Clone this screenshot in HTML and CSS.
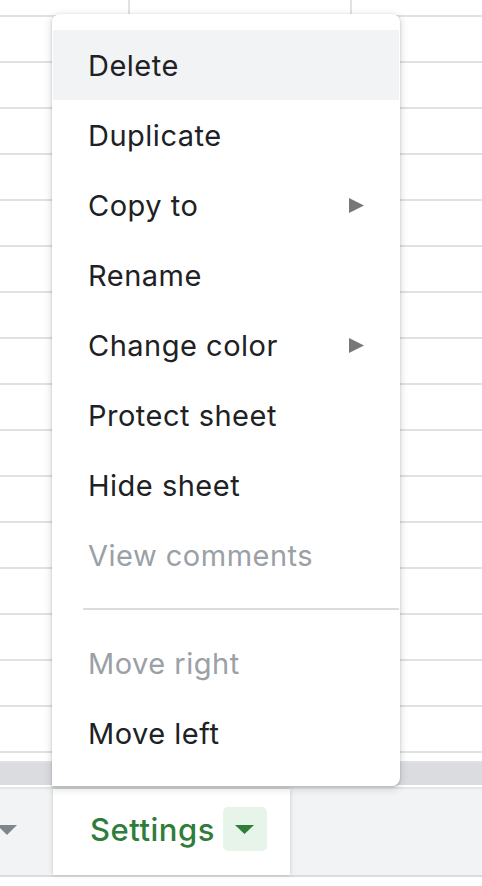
FILE: index.html
```html
<!DOCTYPE html>
<html>
<head>
<meta charset="utf-8">
<link rel="stylesheet" href="styles.css">
</head>
<body>
<div class="page">
  <div class="grid">
    <div class="head-row">
      <div class="hcell c1"></div>
      <div class="hcell c2"></div>
      <div class="hcell c3"></div>
    </div>
    <div class="row"></div><div class="row"></div><div class="row"></div><div class="row"></div>
    <div class="row"></div><div class="row"></div><div class="row"></div><div class="row"></div>
    <div class="row"></div><div class="row"></div><div class="row"></div><div class="row"></div>
    <div class="row"></div><div class="row"></div><div class="row"></div><div class="row"></div>
    <div class="gap"></div>
    <div class="scrollband"></div>
  </div>
  <div class="tabbar">
    <div class="tab-prev">
      <svg class="prev-caret" width="20" height="10" viewBox="0 0 20 10"><path d="M0 0h20L10 10z" fill="#80868b"/></svg>
    </div>
    <div class="tab-active">
      <span class="tab-name">Settings</span>
      <span class="tab-drop"><svg width="19" height="9" viewBox="0 0 19 9"><path d="M0 0h19L9.5 9z" fill="#2e7d3a"/></svg></span>
    </div>
    <div class="tab-rest"></div>
  </div>

  <div class="menu">
    <div class="item active">Delete</div>
    <div class="item">Duplicate</div>
    <div class="item">Copy to <span class="sub"><svg width="15" height="15" viewBox="0 0 15 15"><path d="M0 0L15 7.5L0 15z" fill="#777"/></svg></span></div>
    <div class="item">Rename</div>
    <div class="item">Change color <span class="sub"><svg width="15" height="15" viewBox="0 0 15 15"><path d="M0 0L15 7.5L0 15z" fill="#777"/></svg></span></div>
    <div class="item">Protect sheet</div>
    <div class="item">Hide sheet</div>
    <div class="item disabled">View comments</div>
    <div class="sep"></div>
    <div class="item disabled">Move right</div>
    <div class="item">Move left</div>
  </div>
</div>
</body>
</html>
```

FILE: styles.css
```css
html, body {
  margin: 0;
  padding: 0;
  background: #fff;
}
.page {
  position: relative;
  width: 482px;
  height: 886px;
  overflow: hidden;
  font-family: Inter, Roboto, "Liberation Sans", sans-serif;
}
.grid {
  display: flex;
  flex-direction: column;
}
.head-row {
  display: flex;
  height: 15px;
  border-bottom: 2px solid #e1e1e1;
}
.hcell { height: 15px; }
.c1 { width: 128px; border-right: 2px solid #e1e1e1; }
.c2 { width: 220px; border-right: 2px solid #e1e1e1; }
.c3 { flex: 1; }
.row {
  height: 44px;
  border-bottom: 2px solid #e1e1e1;
}
.gap {
  height: 8px;
  border-bottom: 2px solid #e1e1e1;
}
.scrollband {
  height: 22px;
  background: #dadce0;
  border-bottom: 2px solid #fff;
}
.tabbar {
  display: flex;
  height: 86px;
  border-top: 2px solid #e4e5e7;
  border-bottom: 2px solid #dadce0;
  background: #f1f3f4;
}
.tab-prev {
  width: 53px;
  position: relative;
}
.prev-caret {
  position: absolute;
  left: -3px;
  top: 36px;
}
.tab-active {
  width: 237px;
  box-sizing: border-box;
  padding-bottom: 6px;
  background: #fff;
  display: flex;
  align-items: center;
  box-shadow: 0 0 4px rgba(60,64,67,.25);
  position: relative;
}
.tab-name {
  margin-left: 37px;
  font-size: 31px;
  font-weight: 500;
  color: #2e7d3a;
  letter-spacing: 0.5px;
}
.tab-drop {
  margin-left: 8px;
  width: 44px;
  height: 44px;
  border-radius: 5px;
  background: #e6f4ea;
  display: flex;
  align-items: center;
  justify-content: center;
}
.tab-rest { flex: 1; }

.menu {
  position: absolute;
  left: 52px;
  top: 14px;
  width: 348px;
  height: 772px;
  box-sizing: border-box;
  padding: 16px 1px;
  background: #fff;
  border-radius: 8px 8px 8px 0;
  box-shadow: 0 2px 6px 2px rgba(60,64,67,.15), 0 1px 2px rgba(60,64,67,.3);
}
.item {
  height: 70px;
  display: flex;
  align-items: center;
  padding-left: 35px;
  padding-right: 35px;
  font-size: 29px;
  letter-spacing: 0.5px;
  color: #202124;
}
.item.active { background: #f1f3f4; }
.item.disabled { color: #9aa0a6; }
.sub {
  margin-left: auto;
  display: flex;
}
.sep {
  height: 2px;
  background: #dadce0;
  margin: 18px 0 18px 30px;
}
```
